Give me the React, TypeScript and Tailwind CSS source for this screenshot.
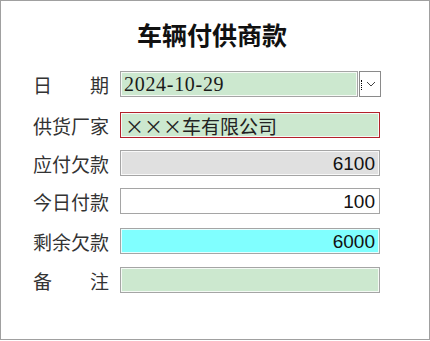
const SERIF = "font-['Liberation_Serif','Noto_Sans_CJK_SC',serif]"
const CJK = "font-['Noto_Sans_CJK_SC',sans-serif]"

function Label({ text }: { text: string }) {
  const chars = text.split('')
  return (
    <div className={`w-[76px] flex justify-between text-[19px] leading-none text-[#333] ${CJK}`}>
      {chars.map((c, i) => (
        <span key={i}>{c}</span>
      ))}
    </div>
  )
}

function Field({
  bg,
  border = 'border-[#a5a5a5]',
  align = 'text-left',
  font = "font-['Liberation_Sans',sans-serif]",
  className = '',
  children,
}: {
  bg: string
  border?: string
  align?: string
  font?: string
  className?: string
  children?: React.ReactNode
}) {
  return (
    <div className={`h-[26px] border ${border} ${className}`}>
      <div className={`h-full border border-white/80 ${bg} ${align} ${font} flex items-center px-[2px] text-[19px] leading-none text-[#111]`}>
        <div className="w-full">{children}</div>
      </div>
    </div>
  )
}

export default function App() {
  return (
    <div className="w-[430px] h-[341px] bg-white">
      <div className="w-[430px] h-[340px] border border-[#a0a0a0] bg-white">
        <h1 className={`pt-[21px] pr-[6px] text-center text-[25px] leading-[30px] font-bold text-[#111] ${SERIF}`}>
          车辆付供商款
        </h1>

        <div className="mt-[19px] pl-[32px] flex flex-col">
          <div className="flex items-center gap-[11px]">
            <Label text="日期" />
            <div className="flex gap-px">
              <Field bg="bg-[#cce8cf]" font={SERIF} className="w-[238px]">
                <span className="text-[20px] tracking-[0.7px] text-[#1a1a1a]">2024-10-29</span>
              </Field>
              <div className="w-[22px] h-[26px] border border-[#8a8a8a] bg-white relative flex items-center justify-center">
                <span className="absolute left-[1px] top-[8px] h-[10px] border-l border-dotted border-black" />
                <svg width="10" height="6" viewBox="0 0 10 6" className="ml-[2px]">
                  <path d="M1 1l4 4 4-4" fill="none" stroke="#444" strokeWidth="1" />
                </svg>
              </div>
            </div>
          </div>

          <div className="mt-[15px] flex items-center gap-[11px]">
            <Label text="供货厂家" />
            <Field bg="bg-[#cce8cf]" border="border-[#b3202a]" font={CJK} className="w-[260px] h-[26px]">
              <span className="pl-px text-[#222]">×××车有限公司</span>
            </Field>
          </div>

          <div className="mt-[12px] flex items-center gap-[11px]">
            <Label text="应付欠款" />
            <Field bg="bg-[#e0e0e0]" align="text-right" className="w-[260px]">
              <span className="pr-[1px]">6100</span>
            </Field>
          </div>

          <div className="mt-[12px] flex items-center gap-[11px]">
            <Label text="今日付款" />
            <Field bg="bg-white" align="text-right" className="w-[260px]">
              <span className="pr-[1px]">100</span>
            </Field>
          </div>

          <div className="mt-[14px] flex items-center gap-[11px]">
            <Label text="剩余欠款" />
            <Field bg="bg-[#80ffff]" align="text-right" className="w-[260px]">
              <span className="pr-[1px]">6000</span>
            </Field>
          </div>

          <div className="mt-[13px] flex items-center gap-[11px]">
            <Label text="备注" />
            <Field bg="bg-[#cce8cf]" className="w-[260px]" />
          </div>
        </div>
      </div>
    </div>
  )
}
